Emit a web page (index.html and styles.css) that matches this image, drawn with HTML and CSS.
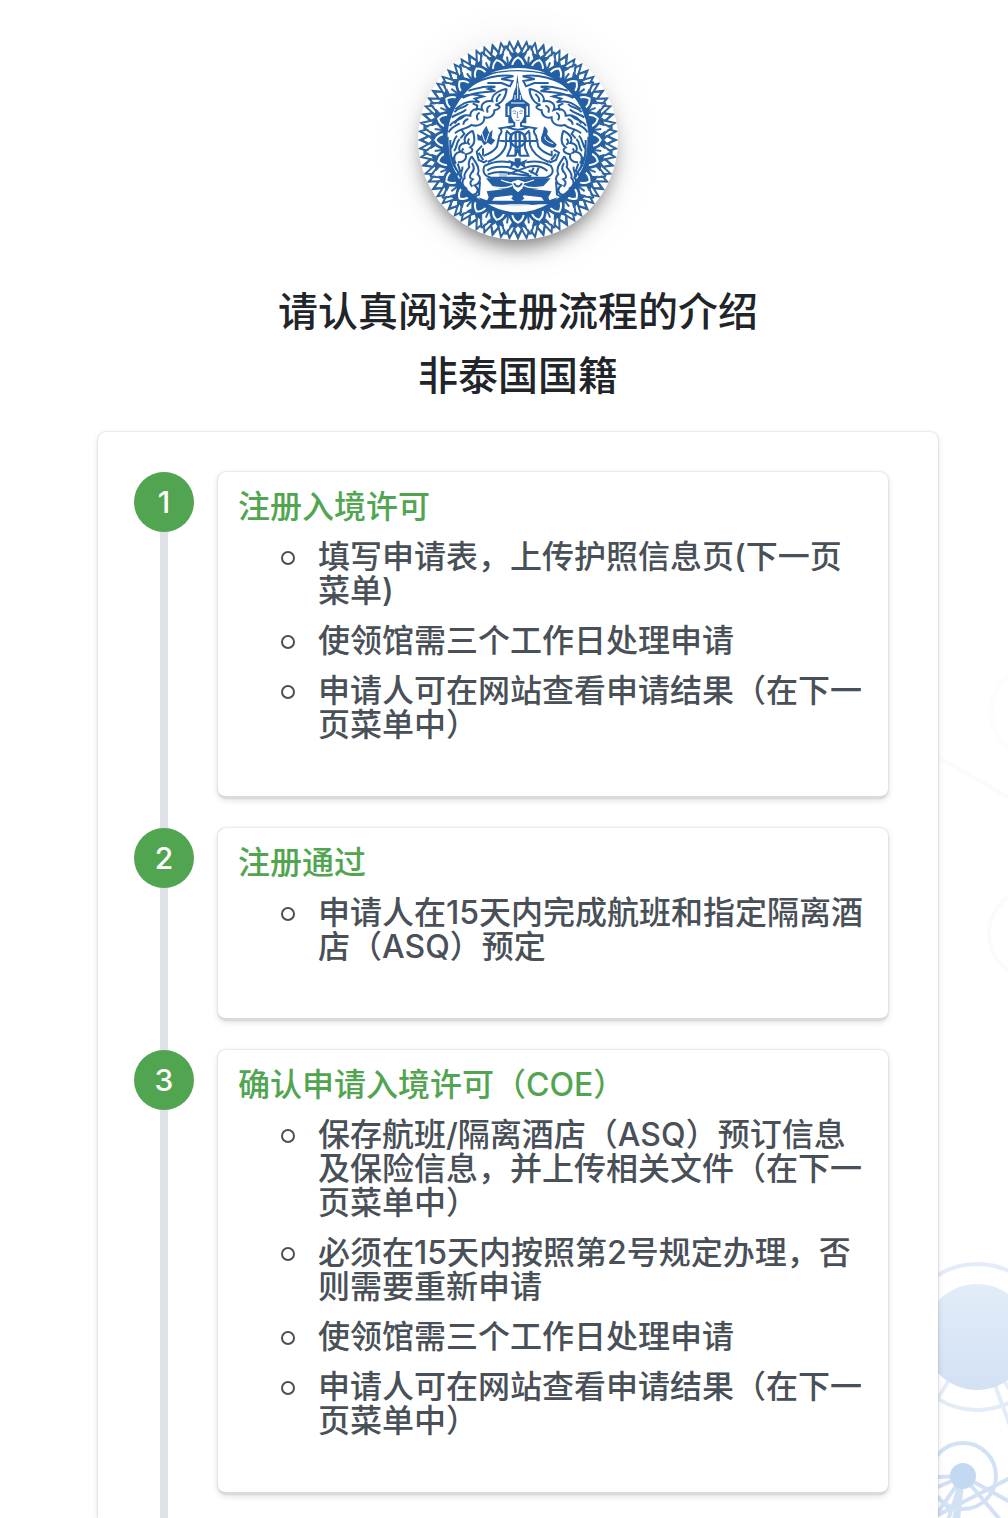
FILE: index.html
```html
<!DOCTYPE html>
<html lang="zh-CN">
<head>
    <meta charset="UTF-8">
    <meta name="viewport" content="width=device-width, initial-scale=1.0">
    <title>注册流程</title>
    <link rel="stylesheet" href="styles.css">
</head>
<body>
    <svg class="network" viewBox="938 660 70 858" aria-hidden="true">
        <defs>
            <linearGradient id="node-fill" x1="0" y1="0" x2="0" y2="1">
                <stop offset="0" stop-color="#e3ecf8"/>
                <stop offset="1" stop-color="#d2e1f4"/>
            </linearGradient>
        </defs>
        <g fill="none" stroke="#f9fbff" stroke-width="4">
            <circle cx="1036" cy="712" r="45" stroke="#fdfdff"/>
            <path d="M938 757L1008 797"/>
            <circle cx="1034" cy="934" r="45"/>
        </g>
        <g fill="none" stroke="#e3ecf8" stroke-width="4">
            <circle cx="977" cy="1337" r="73"/>
            <path d="M949 1380L938 1398M995 1385L1010 1426M1004 1381L1010 1390"/>
        </g>
        <circle cx="977" cy="1337" r="53" fill="url(#node-fill)"/>
        <g fill="none" stroke="#d3e1f5" stroke-width="4">
            <circle cx="963" cy="1476" r="33"/>
            <path d="M963 1476L938 1477M963 1476L938 1487M963 1476L934 1518M963 1476L948 1520M963 1476L954 1520M963 1476L958 1520M963 1476L1002 1522M963 1476L1010 1502M936 1516L1010 1478M938 1497L952 1512"/>
        </g>
        <circle cx="963" cy="1476" r="13" fill="#c3d8f1"/>
    </svg>

    <main class="page">
        <header class="header">
            <svg class="emblem" viewBox="54 60 600 600" role="img" aria-label="徽章">
                <g id="rays"></g>
                <circle cx="354" cy="360" r="226" fill="#245fa3"/>
                <circle cx="354" cy="360" r="212" fill="#fff"/>
                <path class="solid" d="M262 164Q354 122 446 164Q354 143 262 164ZM235 532Q354 580 473 532L462 546Q354 612 246 546Z"/>
                <path d="M272 158Q354 130 436 158Q354 142 272 158ZM257 548Q354 606 451 548Q354 564 257 548Z" fill="#fff"/>

                <!-- flames, left half, mirrored below -->
                <g id="flames">
                    <path class="ink" d="M196 207C240 175 300 160 340 169L304 177L338 183L330 199L305 189L262 189M205 212C235 205 250 196 286 200L265 207L286 213C258 219 225 212 188 234M180 232C205 220 228 222 250 229L224 236L238 247C210 240 190 247 166 268"/>
                    <path class="ink" d="M320 206C290 212 272 229 277 244C255 240 239 253 247 270C229 262 211 270 211 287C193 282 173 291 164 311M320 206C318 233 304 252 286 254C305 258 302 266 283 271C284 286 270 296 253 292C254 311 234 321 214 315C202 327 181 325 165 340M302 222Q287 234 291 246M272 257Q257 262 263 278M239 278Q225 285 234 301M205 297Q190 302 190 314"/>
                    <path class="ink" d="M163 276C180 258 194 265 204 252M155 292C171 280 190 279 198 268M150 318C160 298 183 302 194 286M146 337C152 321 170 316 179 310M218 250L232 257L229 272M185 330L193 342L181 355"/>
                    <path class="ink" d="M218 332C226 355 226 373 211 382C225 390 213 402 197 403C202 418 187 430 174 426M218 332C198 343 188 354 197 369C179 370 173 384 181 395C162 398 158 416 168 431M208 356Q198 369 210 374M190 385Q180 400 194 398M171 347C158 360 162 375 151 388M179 357C166 369 174 380 162 393M143 350C142 400 148 438 169 464M151 360C149 401 154 430 169 450M160 410L164 438L182 472"/>
                    <path class="ink" d="M215 409C228 430 242 444 233 463C246 475 239 491 224 496C238 506 235 519 222 524C203 525 194 515 199 505C185 498 184 482 194 474C189 459 203 449 208 441C203 429 208 419 215 409M216 429Q228 448 214 459Q204 474 218 478Q205 489 217 500M187 440C190 455 177 458 185 473C174 481 182 493 190 503M173 431L180 452L168 469M240 485L237 524L219 532M194 516L211 537"/>
                </g>
                <use href="#flames" transform="matrix(-1 0 0 1 708 0)"/>

                <!-- lotus and conch held at the sides -->
                <path class="solid" d="M231 341L242 348L249 333L259 317L268 339L278 329L275 354L286 361L274 375L263 368L252 376L244 362L233 361Z"/>
                <path class="solid" d="M432 319Q448 329 441 343Q450 358 470 373Q468 389 447 380Q420 372 423 353Q430 339 432 319Z"/>
                <path class="ink" d="M246 377L230 395L236 420L252 427L268 417L249 405V385M236 398L250 420M461 389L477 398L468 420L451 427L438 414L455 405V392M468 402L453 420"/>
                <path d="M244 334L254 364M267 340L258 366M435 350Q431 362 459 371" fill="none" stroke="#fff" stroke-width="3"/>

                <!-- crown and head -->
                <path class="solid" d="M352 163L357 200L362 218L368 237L389 252V291H379V310H325V291H316V252L337 237L341 218L348 200Z"/>
                <path d="M353 190V236M345 225V240M361 225V240M333 249H374" fill="none" stroke="#fff" stroke-width="3"/>
                <path d="M334 267Q353 254 372 267V288Q366 309 353 311Q340 309 334 288ZM323 259H328V286H323ZM379 259H384V286H379Z" fill="#fff"/>
                <path class="thin" d="M338 274Q344 270 349 275M358 275Q363 270 369 274M340 280H348M359 280H367M353 275L351 292H356M347 300Q353 304 359 300"/>

                <!-- body -->
                <path d="M343 309H363V319L405 325L414 350L424 390L455 405L445 424L404 407L387 374L378 414H329L319 374L304 407L263 424L250 405L282 390L293 350L302 325L343 319Z" fill="#fff"/>
                <path class="ink" d="M343 308V318L300 325Q310 332 298 347L291 380Q280 397 252 407M363 308V318L407 325Q396 332 408 347L415 380Q427 397 457 407M319 336L318 374Q310 407 263 426M388 336L390 374Q399 407 446 426M319 331L334 347L332 384L322 407H345L353 389L361 407H385L375 384L373 347L388 331M321 321Q353 337 386 321M292 361L315 364M391 364L415 361M320 363H388"/>
                <path d="M336 342Q353 329 370 342Q386 363 365 377Q353 384 341 377Q322 363 336 342ZM347 337V407M359 337V407" fill="none" stroke="#245fa3" stroke-width="7"/>

                <!-- crossed legs -->
                <path d="M253 437Q297 412 350 431Q406 412 454 437Q467 465 438 473H274Q244 464 253 437Z" fill="#fff"/>
                <path class="ink" d="M253 438Q289 419 329 427M379 427Q420 419 453 438Q468 462 438 473H273Q243 465 253 438M262 452Q275 437 323 441L387 463M442 453Q418 430 379 442L323 463M263 463Q300 450 338 461L394 468M386 451L414 467M401 443L393 460M416 443L407 465"/>
                <path class="thin" d="M300 459V473M306 459V473M312 459V473M318 459V473"/>
                <path class="solid" d="M344 415H362V426L382 418L374 434L379 446L361 436L353 446L343 436L328 446L333 433L324 419L344 426Z"/>

                <!-- pedestal -->
                <path class="solid" d="M258 475H452L428 501L402 508L455 514L445 532L453 553H255L266 532L260 514L309 508L280 501Z"/>
                <path d="M277 500Q316 508 337 496M430 500Q391 508 370 496M303 480Q353 501 402 480" fill="none" stroke="#fff" stroke-width="4"/>
                <path d="M284 532L336 526L345 542H276ZM424 532L371 526L362 542H432Z" fill="#fff"/>
                <path d="M334 486L354 479L374 486L367 505L354 517L341 505Z" fill="#fff"/>
                <path class="ink" d="M342 490Q354 509 366 490M353 521L369 535L354 547L338 535Z"/>
            </svg>
            <h1 class="title">请认真阅读注册流程的介绍</h1>
            <h1 class="title">非泰国国籍</h1>
        </header>

        <section class="panel">
            <ol class="steps">
                <li class="step">
                    <div class="step-marker"><span class="step-number">1</span></div>
                    <div class="step-card">
                        <h2>注册入境许可</h2>
                        <ul>
                            <li>填写申请表，上传护照信息页(下一页菜单)</li>
                            <li>使领馆需三个工作日处理申请</li>
                            <li>申请人可在网站查看申请结果（在下一页菜单中）</li>
                        </ul>
                    </div>
                </li>
                <li class="step">
                    <div class="step-marker"><span class="step-number">2</span></div>
                    <div class="step-card">
                        <h2>注册通过</h2>
                        <ul>
                            <li>申请人在15天内完成航班和指定隔离酒店（ASQ）预定</li>
                        </ul>
                    </div>
                </li>
                <li class="step">
                    <div class="step-marker"><span class="step-number">3</span></div>
                    <div class="step-card">
                        <h2>确认申请入境许可（COE）</h2>
                        <ul>
                            <li>保存航班/隔离酒店（ASQ）预订信息及保险信息，并上传相关文件（在下一页菜单中）</li>
                            <li>必须在15天内按照第2号规定办理，否则需要重新申请</li>
                            <li>使领馆需三个工作日处理申请</li>
                            <li>申请人可在网站查看申请结果（在下一页菜单中）</li>
                        </ul>
                    </div>
                </li>
            </ol>
        </section>
    </main>

    <script src="emblem.js"></script>
</body>
</html>
```
FILE: emblem.js
```javascript
// Draws the ring of petals and rays around the emblem
const rays = document.getElementById('rays');
const petals = 24;
let shapes = '';

function point(radius, degrees) {
    const a = degrees * Math.PI / 180;
    return (354 + radius * Math.sin(a)).toFixed(1) + ' ' + (360 - radius * Math.cos(a)).toFixed(1);
}

// outer zigzag
const edge = [];
for (let i = 0; i < petals * 3; i++) {
    edge.push(point(295, i * 5), point(268, i * 5 + 2.5));
}
shapes += '<path class="ray" d="M' + edge.join('L') + 'Z"/>';
shapes += '<circle cx="354" cy="360" r="243" fill="none" stroke="#245fa3" stroke-width="40"/>';

for (let i = 0; i < petals; i++) {
    // white tulip between two petals
    shapes += '<g transform="rotate(' + (i * 15 + 7.5) + ' 354 360)">'
        + '<path d="M354 82L368 112L354 130L340 112Z" fill="#fff"/>'
        + '<path class="ray" d="M354 74L334 112M354 74L374 112M354 108V130"/>'
        + '</g>';
    // petal
    shapes += '<g transform="rotate(' + (i * 15) + ' 354 360)">'
        + '<path d="M354 82L361 92L354 102L347 92Z" fill="#fff"/>'
        + '<path class="ray" d="M354 70L342 92L354 108L366 92Z"/>'
        + '<path d="M337 137Q338 121 354 112Q370 121 371 137" fill="none" stroke="#fff" stroke-width="6"/>'
        + '</g>';
}

rays.innerHTML = shapes;
```
FILE: styles.css
```css
* {
    box-sizing: border-box;
}

body {
    margin: 0;
    position: relative;
    font-family: Inter, "Noto Sans CJK SC", sans-serif;
    font-weight: 500;
    color: #212529;
    background-color: #fff;
}

.network {
    position: absolute;
    right: 0;
    bottom: 0;
    width: 70px;
}

.page {
    position: relative;
    display: flex;
    flex-direction: column;
    min-height: 100vh;
    padding: 40px 70px 0 98px;
}

.header {
    display: flex;
    flex-direction: column;
    align-items: center;
    text-align: center;
}

.emblem {
    width: 200px;
    height: 200px;
    margin-bottom: 48px;
    border-radius: 50%;
    background-color: #fff;
    box-shadow: 0 12px 20px -6px rgba(0, 0, 0, 0.5), 0 4px 50px rgba(0, 0, 0, 0.08);
}

.emblem .solid {
    fill: #245fa3;
}

.emblem .ink {
    fill: none;
    stroke: #245fa3;
    stroke-width: 6;
}

.emblem .thin {
    fill: none;
    stroke: #245fa3;
    stroke-width: 2;
}

.emblem .ray {
    fill: none;
    stroke: #2f659f;
    stroke-width: 6;
}

.title {
    margin: 0 0 16px;
    font-size: 40px;
    line-height: 48px;
    font-weight: 500;
}

.panel {
    display: flex;
    flex: 1;
    margin-top: 16px;
    padding: 40px 50px 0 36px;
    border-radius: 8px 8px 0 0;
    background-color: #fff;
    box-shadow: 0 0 2px rgba(0, 0, 0, 0.2), 0 2px 6px rgba(0, 0, 0, 0.12);
}

.steps {
    display: flex;
    flex: 1;
    flex-direction: column;
    margin: 0;
    padding: 0;
    list-style: none;
}

.step {
    display: flex;
    gap: 24px;
}

.step:last-child {
    flex: 1;
}

.step-marker {
    flex: none;
    width: 60px;
    background: linear-gradient(#dee2e6, #dee2e6) center / 8px 100% no-repeat;
}

.step-number {
    display: block;
    height: 60px;
    border-radius: 50%;
    background-color: #52a550;
    color: #fff;
    font-size: 30px;
    line-height: 60px;
    text-align: center;
}

.step-card {
    flex: 1;
    align-self: flex-start;
    margin-bottom: 30px;
    padding: 18px 20px 54px;
    border-bottom: 2px solid #dadada;
    border-radius: 8px;
    background-color: #fff;
    box-shadow: 0 0 2px rgba(0, 0, 0, 0.2), 0 2px 6px rgba(0, 0, 0, 0.14);
}

.step:last-child .step-card {
    margin-bottom: 0;
}

h2 {
    margin: 0 0 16px;
    color: #52a550;
    font-size: 32px;
    line-height: 34px;
    font-weight: 500;
}

.step-card ul {
    margin: 0;
    padding-left: 43px;
    color: #495057;
    font-size: 32px;
    line-height: 34px;
    list-style: none;
}

.step-card li {
    display: flex;
    gap: 23px;
}

.step-card li::before {
    content: "";
    flex: none;
    width: 10px;
    height: 10px;
    margin-top: 11px;
    border: 2px solid #495057;
    border-radius: 50%;
}

.step-card li + li {
    margin-top: 16px;
}
```
